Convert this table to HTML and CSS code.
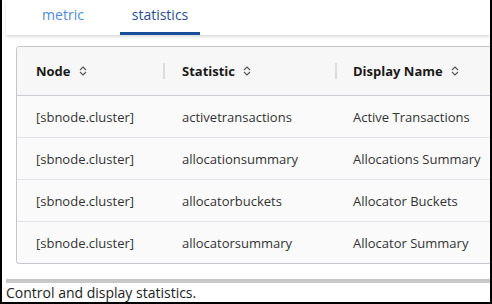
FILE: index.html
```html
<!DOCTYPE html>
<html>
<head>
<meta charset="utf-8">
<link rel="stylesheet" href="styles.css">
</head>
<body>
<div class="frame">
  <div class="inner">
    <nav class="tabs">
      <div class="tab">metric</div>
      <div class="tab active">statistics</div>
    </nav>
    <div class="main">
      <div class="card">
        <table class="grid">
          <thead>
            <tr>
              <th class="c1"><span class="hd">Node <svg class="sort" viewBox="0 0 10 12"><path d="M2 5 L5 2 L8 5 M2 7 L5 10 L8 7" fill="none" stroke="#555" stroke-width="1.1"/></svg></span></th>
              <th class="c2"><span class="hd">Statistic <svg class="sort" viewBox="0 0 10 12"><path d="M2 5 L5 2 L8 5 M2 7 L5 10 L8 7" fill="none" stroke="#555" stroke-width="1.1"/></svg></span></th>
              <th class="c3"><span class="hd">Display Name <svg class="sort" viewBox="0 0 10 12"><path d="M2 5 L5 2 L8 5 M2 7 L5 10 L8 7" fill="none" stroke="#555" stroke-width="1.1"/></svg></span></th>
            </tr>
          </thead>
          <tbody>
            <tr><td>[sbnode.cluster]</td><td>activetransactions</td><td>Active Transactions</td></tr>
            <tr><td>[sbnode.cluster]</td><td>allocationsummary</td><td>Allocations Summary</td></tr>
            <tr><td>[sbnode.cluster]</td><td>allocatorbuckets</td><td>Allocator Buckets</td></tr>
            <tr><td>[sbnode.cluster]</td><td>allocatorsummary</td><td>Allocator Summary</td></tr>
          </tbody>
        </table>
      </div>
    </div>
    <div class="scrollbar"></div>
    <div class="status">Control and display statistics.</div>
  </div>
</div>
</body>
</html>
```
FILE: styles.css
```css
html, body {
  margin: 0;
  padding: 0;
  background: #fff;
}
.frame {
  width: 492px;
  height: 304px;
  box-sizing: border-box;
  border-left: 2px solid #000;
  border-right: 2px solid #000;
  border-bottom: 2px solid #000;
  overflow: hidden;
  font-family: "Open Sans", "Noto Sans", sans-serif;
}
.inner {
  padding-left: 4px;
}
.tabs {
  height: 35px;
  display: flex;
  background: #fff;
  box-shadow: 0 2px 3px rgba(0, 0, 0, 0.14);
  position: relative;
  z-index: 1;
}
.tab {
  font-size: 14px;
  color: #4b8bea;
  padding: 5px 0 0;
  box-sizing: border-box;
  width: 80px;
  text-align: center;
}
.tab:first-child {
  margin-left: 17px;
  margin-right: 17px;
}
.tab.active {
  color: #1f4f94;
  border-bottom: 3px solid #174f9c;
}
.main {
  padding: 11px 0 0 10px;
  height: 233px;
  overflow: hidden;
}
.card {
  border: 1px solid #c3c6cc;
  border-right: none;
  border-radius: 4px 0 0 4px;
  width: 520px;
  overflow: hidden;
  background: #fff;
}
.grid {
  border-collapse: collapse;
  width: 100%;
  font-size: 13px;
  color: #333;
}
.grid th {
  background: #f7f7f7;
  height: 48px;
  text-align: left;
  font-weight: 700;
  color: #1a1a1a;
  padding: 0;
  border-bottom: 1px solid #c9ccd2;
}
.hd {
  display: flex;
  align-items: center;
  height: 16px;
  padding-left: 19px;
}
.c2 .hd {
  border-left: 2px solid #dcdcdc;
  padding-left: 17px;
}
.c3 .hd {
  border-left: 2px solid #dcdcdc;
  padding-left: 16px;
}
.c1 { width: 146px; }
.c2 { width: 172px; }
.sort {
  width: 10px;
  height: 12px;
  margin-left: 7px;
}
.grid td {
  height: 41px;
  padding: 0 0 0 19px;
  border-bottom: 1px solid #e1e3e8;
  background: #fafafa;
  white-space: nowrap;
}
.grid td:nth-child(2) {
  padding-left: 19px;
}
.grid td:nth-child(3) {
  padding-left: 18px;
}
.grid tr:last-child td {
  border-bottom: none;
}
.scrollbar {
  height: 4px;
  background: #c8c8c8;
}
.status {
  font-size: 14px;
  color: #222;
  padding-top: 1px;
  line-height: 17px;
}
```
